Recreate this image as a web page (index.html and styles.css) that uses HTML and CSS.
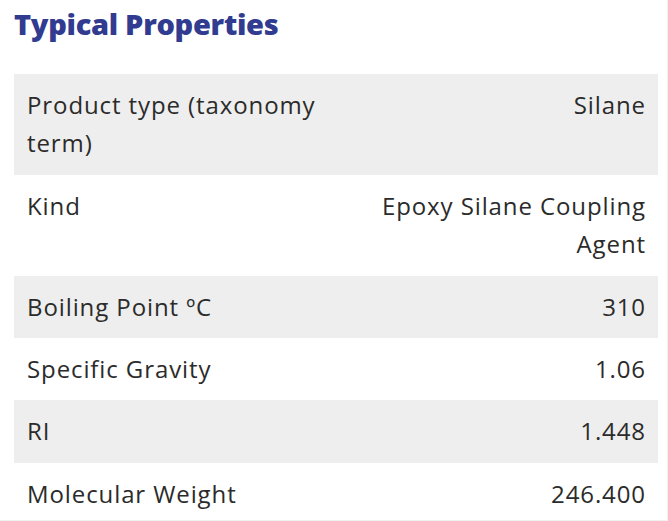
FILE: index.html
```html
<!DOCTYPE html>
<html lang="en">
<head>
<meta charset="utf-8">
<link rel="stylesheet" href="styles.css">
<title>Typical Properties</title>
</head>
<body>
<div class="frame">
  <section class="props">
    <h2 class="props-title">Typical Properties</h2>
    <table class="props-table">
      <tbody>
        <tr class="odd"><td class="name">Product type (taxonomy term)</td><td class="value">Silane</td></tr>
        <tr><td class="name">Kind</td><td class="value">Epoxy Silane Coupling Agent</td></tr>
        <tr class="odd"><td class="name">Boiling Point ºC</td><td class="value">310</td></tr>
        <tr><td class="name">Specific Gravity</td><td class="value">1.06</td></tr>
        <tr class="odd"><td class="name">RI</td><td class="value">1.448</td></tr>
        <tr><td class="name">Molecular Weight</td><td class="value">246.400</td></tr>
      </tbody>
    </table>
  </section>
</div>
</body>
</html>
```
FILE: styles.css
```css
html, body {
  margin: 0;
  padding: 0;
  background: #ffffff;
}
body {
  font-family: "Open Sans", "Noto Sans", sans-serif;
  color: #2b2b2b;
}
.frame {
  width: 667px;
  height: 520px;
  border-right: 1px solid #f1f1f1;
  border-bottom: 1px solid #f1f1f1;
  overflow: hidden;
}
.props {
  padding: 0 9px 0 14px;
}
.props-title {
  margin: 0;
  padding-top: 5px;
  height: 74px;
  box-sizing: border-box;
  font-family: "Open Sans", sans-serif;
  font-weight: 800;
  font-size: 29px;
  line-height: 38px;
  color: #313b8f;
  letter-spacing: -0.3px;
}
.props-table {
  width: 100%;
  border-collapse: collapse;
  table-layout: fixed;
}
.props-table td {
  padding: 12px 12px 12px 13px;
  font-size: 24px;
  line-height: 1.6;
  vertical-align: top;
  letter-spacing: 0.9px;
}
.props-table tr.odd td {
  background: #eeeeee;
}
.props-table .value {
  text-align: right;
}
```
